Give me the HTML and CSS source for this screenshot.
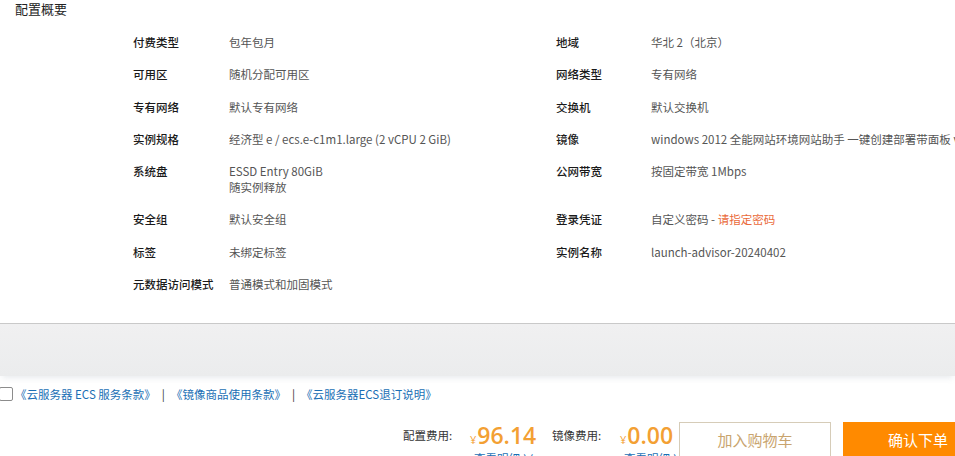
FILE: index.html
```html
<!DOCTYPE html>
<html lang="zh-CN">
<head>
<meta charset="utf-8">
<title>配置概要</title>
<link rel="stylesheet" href="styles.css">
</head>
<body>
<div class="page">
  <section class="panel">
    <h2 class="panel-title">配置概要</h2>
    <div class="summary">
      <div class="label">付费类型</div><div class="value">包年包月</div>
      <div class="label">地域</div><div class="value">华北 2（北京）</div>

      <div class="label">可用区</div><div class="value">随机分配可用区</div>
      <div class="label">网络类型</div><div class="value">专有网络</div>

      <div class="label">专有网络</div><div class="value">默认专有网络</div>
      <div class="label">交换机</div><div class="value">默认交换机</div>

      <div class="label">实例规格</div><div class="value">经济型 e / ecs.e-c1m1.large (2 vCPU 2 GiB)</div>
      <div class="label">镜像</div><div class="value">windows 2012 全能网站环境网站助手 一键创建部署带面板 v1.0</div>

      <div class="label">系统盘</div><div class="value">ESSD Entry 80GiB<br>随实例释放</div>
      <div class="label">公网带宽</div><div class="value">按固定带宽 1Mbps</div>

      <div class="label">安全组</div><div class="value">默认安全组</div>
      <div class="label">登录凭证</div><div class="value">自定义密码 - <span class="warn">请指定密码</span></div>

      <div class="label">标签</div><div class="value">未绑定标签</div>
      <div class="label">实例名称</div><div class="value">launch-advisor-20240402</div>

      <div class="label">元数据访问模式</div><div class="value">普通模式和加固模式</div>
    </div>
  </section>
  <div class="spacer"></div>
  <div class="terms">
    <span class="checkbox"></span>
    <a class="term-link" href="#">《云服务器 ECS 服务条款》</a>
    <span class="sep">|</span>
    <a class="term-link" href="#">《镜像商品使用条款》</a>
    <span class="sep">|</span>
    <a class="term-link" href="#">《云服务器ECS退订说明》</a>
  </div>
  <div class="order">
    <div class="fee fee-config">
      <span class="fee-label">配置费用:</span>
      <span class="price"><span class="yen">¥</span>96.14</span>
      <a class="detail" href="#">查看明细 ∨</a>
    </div>
    <div class="fee fee-image">
      <span class="fee-label">镜像费用:</span>
      <span class="price"><span class="yen">¥</span>0.00</span>
      <a class="detail" href="#">查看明细 ∨</a>
    </div>
    <button class="btn btn-cart">加入购物车</button>
    <button class="btn btn-confirm">确认下单</button>
  </div>
</div>
</body>
</html>
```
FILE: styles.css
```css
html, body {
  margin: 0;
  padding: 0;
  background: #ffffff;
  overflow: hidden;
}
body {
  width: 955px;
  height: 456px;
  font-family: "Noto Sans CJK SC", "Noto Sans", sans-serif;
  font-size: 11.5px;
  color: #333;
}
.page {
  width: 955px;
  overflow: hidden;
}
.panel {
  background: #fff;
  border-bottom: 1px solid #c9c9c9;
  padding-bottom: 31px;
}
.panel-title {
  margin: 0;
  padding-left: 15px;
  font-size: 13px;
  line-height: 17px;
  font-weight: normal;
  color: #222;
}
.summary {
  margin-top: 17px;
  margin-left: 133px;
  display: grid;
  grid-template-columns: 96px 327px 95px 1fr;
  row-gap: 16.3px;
  line-height: 16px;
}
.label {
  color: #1a1a1a;
  font-weight: 500;
  white-space: nowrap;
}
.value {
  color: #555;
  white-space: nowrap;
}
.warn {
  color: #ea6a3a;
}
.spacer {
  height: 52px;
  background: linear-gradient(#f0f0f1, #ebeced);
  box-shadow: 0 4px 6px -2px rgba(230, 233, 236, 0.9);
}
.terms {
  margin-top: 8px;
  height: 20px;
  display: flex;
  align-items: center;
  line-height: 20px;
  white-space: nowrap;
}
.checkbox {
  display: inline-block;
  flex: none;
  width: 14px;
  height: 14px;
  box-sizing: border-box;
  border: 1px solid #8c8c8c;
  border-radius: 2px;
  margin-left: -1px;
  margin-right: 2px;
  background: #fff;
}
.term-link {
  color: #1a6fb5;
  text-decoration: none;
}
.sep {
  color: #333;
  margin: 0 6px;
}
.order {
  margin-top: 18px;
  padding-left: 403px;
  display: flex;
  align-items: flex-start;
  white-space: nowrap;
}
.fee {
  flex: none;
  display: grid;
  grid-template-columns: 67px auto;
  grid-template-rows: 26px 20px;
}
.fee-config {
  width: 149px;
}
.fee-image {
  width: 127px;
  grid-template-columns: 68px auto;
}
.fee-label {
  line-height: 26px;
  color: #333;
}
.price {
  line-height: 26px;
  font-family: "Open Sans", "Noto Sans", sans-serif;
  font-size: 23px;
  font-weight: 600;
  color: #f3a033;
}
.yen {
  font-size: 11px;
  font-weight: normal;
  margin-right: 1px;
}
.detail {
  grid-column: 2;
  padding-left: 4px;
  color: #1a6fb5;
  text-decoration: none;
  line-height: 20px;
  font-size: 11.5px;
}
.btn {
  height: 35px;
  margin: 0;
  padding: 0;
  font-family: "Noto Sans CJK SC", "Noto Sans", sans-serif;
  font-size: 15px;
  flex: none;
  cursor: pointer;
}
.btn-cart {
  width: 152px;
  background: #fff;
  border: 1px solid #d6ccb8;
  color: #c9a46e;
}
.btn-confirm {
  width: 150px;
  margin-left: 12px;
  background: #ff8a00;
  border: 1px solid #ff8a00;
  color: #fff;
}
```
